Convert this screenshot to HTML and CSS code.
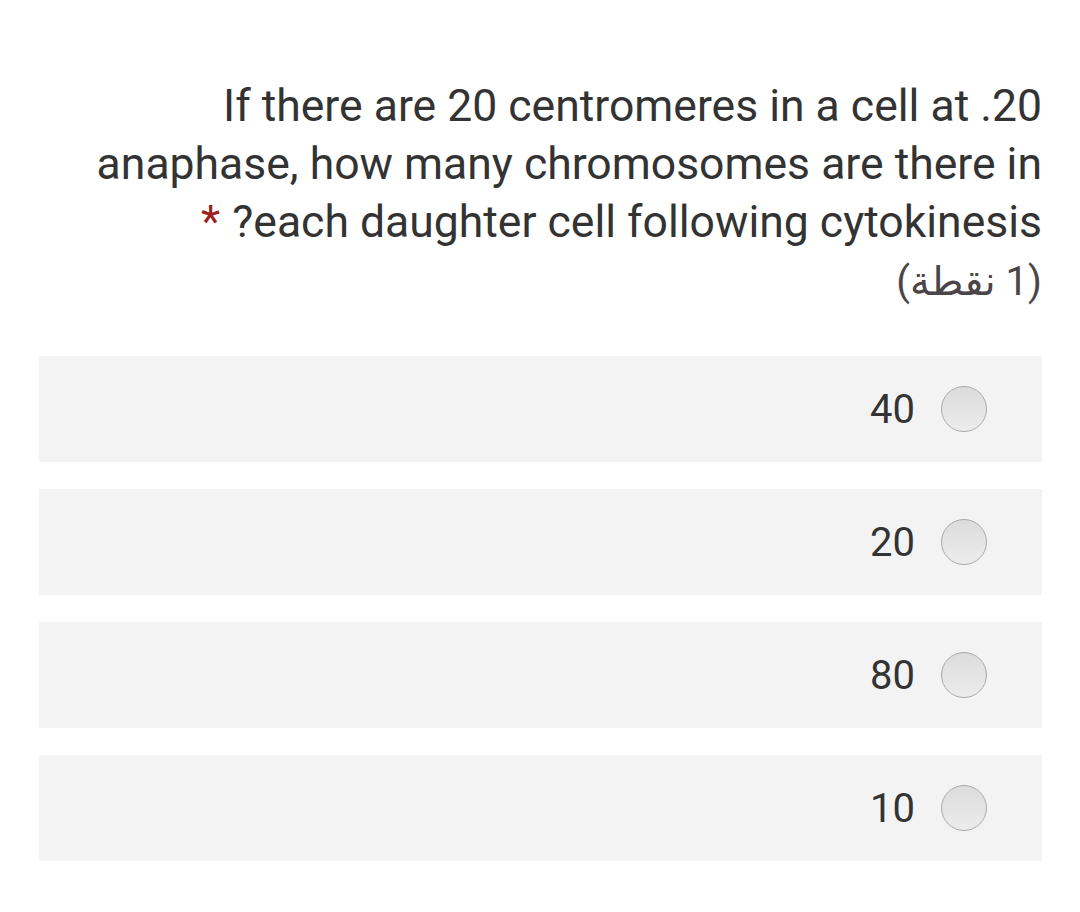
FILE: index.html
```html
<!DOCTYPE html>
<html lang="ar" dir="rtl">
<head>
<meta charset="utf-8">
<link rel="stylesheet" href="styles.css">
</head>
<body>
<div class="page">
  <div class="question">
    <div class="title">20. If there are 20 centromeres in a cell at anaphase, how many chromosomes are there in each daughter cell following cytokinesis?<span class="req">*</span></div>
    <div class="points">(1 نقطة)</div>
  </div>
  <div class="options">
    <label class="option"><span class="radio"></span><span class="label">40</span></label>
    <label class="option"><span class="radio"></span><span class="label">20</span></label>
    <label class="option"><span class="radio"></span><span class="label">80</span></label>
    <label class="option"><span class="radio"></span><span class="label">10</span></label>
  </div>
</div>
</body>
</html>
```
FILE: styles.css
```css
html, body {
  margin: 0;
  padding: 0;
  background: #ffffff;
}
.page {
  padding: 77px 38px 0 39px;
  font-family: Roboto, "Noto Sans", sans-serif;
  color: #333333;
}
.question {
  text-align: right;
}
.title {
  font-size: 44.5px;
  line-height: 58px;
}
.req {
  color: #a01f1f;
  margin-inline-start: 12px;
}
.points {
  font-size: 40px;
  line-height: 62px;
  color: #4a4548;
  font-family: Roboto, "DejaVu Sans", sans-serif;
}
.options {
  margin-top: 43px;
  display: flex;
  flex-direction: column;
  gap: 27px;
}
.option {
  display: flex;
  align-items: center;
  height: 106px;
  background: #f3f3f3;
  padding-right: 55px;
  gap: 26px;
}
.radio {
  width: 44px;
  height: 44px;
  border-radius: 50%;
  border: 1px solid #a9a9a9;
  background: linear-gradient(#dcdcdc, #ececec);
}
.label {
  font-size: 40px;
  color: #333333;
}
```
